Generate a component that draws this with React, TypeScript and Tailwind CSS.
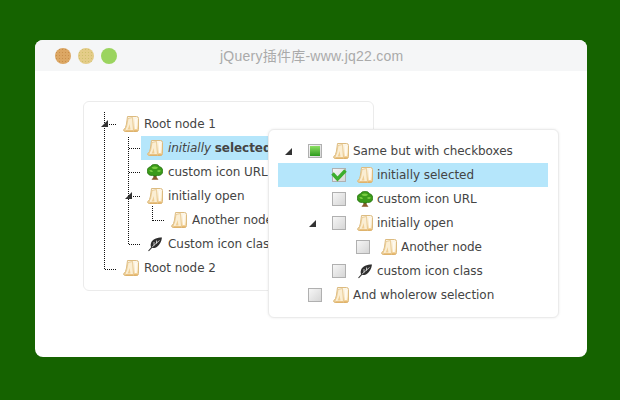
import React from "react";

const font = { fontFamily: '"DejaVu Sans", Verdana, sans-serif' };
const titleFont = { fontFamily: '"Liberation Sans", "Noto Sans CJK SC", sans-serif' };

// jstree style paper folder
function FolderIcon() {
    return (
        <svg width="16" height="16" viewBox="0 0 16 16" className="shrink-0">
            <defs>
                <linearGradient id="folderFill" x1="0" y1="0" x2="0" y2="1">
                    <stop offset="0" stopColor="#fdf8ec" />
                    <stop offset="0.6" stopColor="#f9e8c6" />
                    <stop offset="1" stopColor="#efc987" />
                </linearGradient>
            </defs>
            <path d="M4.5 .5 L13.5 .5 Q15.5 .5 15.5 2.5 L15.5 13.5 Q15.5 15.5 13.5 15.5 L3 15.5 Q.5 15.5 .5 14 Q3 12 3.5 8 L4.5 .5 Z" fill="url(#folderFill)" stroke="#dcbb80" />
            <path d="M5 2.5 L9.5 1.5 L10.5 15 L1.5 15 Q4 11 5 2.5 Z" fill="#fbeed3" stroke="#e5c387" strokeWidth=".8" />
            <path d="M2.5 15 L10 15 M11 15 L14.5 15" stroke="#e0a855" strokeWidth="1.2" />
            <path d="M12.8 3 L12.8 13" stroke="#fffaf0" strokeWidth="2" />
            <path d="M4.5 13.5 C5.5 12 6 10 6.5 8 L7.5 13.5 Z" fill="#f0cf95" />
        </svg>
    );
}

function TreeIcon() {
    return (
        <svg width="16" height="16" viewBox="0 0 16 16" className="shrink-0">
            <path d="M6.5 10 L9.5 10 L9.5 13 L11.5 15.8 L4.5 15.8 L6.5 13 Z" fill="#8a5a2b" />
            <path d="M8 .2 C10.5 .2 11.8 1.5 12.3 2.6 C14.8 3.2 16 5.2 15.8 7.5 C15.5 10.4 13 12 10.5 11.4 C9 12.3 7 12.3 5.5 11.4 C3 12 .5 10.4 .2 7.5 C0 5.2 1.2 3.2 3.7 2.6 C4.2 1.5 5.5 .2 8 .2 Z" fill="#3b9a1a" stroke="#1f6a0c" strokeWidth=".7" />
            <path d="M4.5 3.5 C6.5 2 9 2 11 3.5 C10 5.5 6 5.5 4.5 3.5 Z M2.3 6.3 C3.5 5.5 5.5 6 6 7.5 C5 8.5 3 8.2 2.3 6.3 Z M10 7 C11 5.8 13 5.8 14 6.8 C13 8.4 11 8.4 10 7 Z" fill="#79cc42" />
        </svg>
    );
}

function LeafIcon() {
    return (
        <svg width="16" height="16" viewBox="0 0 16 16" className="shrink-0">
            <path d="M15 1.5 C10 1.5 5.5 3 4 7 C3.4 9 3.6 10.6 4.6 12 C9.5 12.8 13.8 9 15 1.5 Z" fill="#2e2e2e" />
            <path d="M4 12.2 C6.5 9.5 9.5 7 12.5 4.5 M7 9.5 L7 6 M9.5 7.5 L9.5 4.5" fill="none" stroke="#fff" strokeWidth=".7" />
            <path d="M1.5 15 L5 11.2" fill="none" stroke="#2e2e2e" strokeWidth="1.1" />
        </svg>
    );
}

function Triangle() {
    return (
        <svg width="7" height="7" viewBox="0 0 7 7" className="block">
            <path d="M7 0 L7 7 L0 7 Z" fill="#333" />
        </svg>
    );
}

type CheckState = "none" | "checked" | "partial";

function Checkbox({ state }: { state: CheckState }) {
    return (
        <span className="relative block h-[14px] w-[14px] shrink-0 border border-[#b0b0b0] bg-gradient-to-br from-[#f6f6f6] to-[#d6d6d6]">
            {state === "partial" && (
                <span className="absolute inset-[1px] bg-gradient-to-b from-[#8be063] to-[#2a9a1c]" />
            )}
            {state === "checked" && (
                <svg width="16" height="13" viewBox="0 0 16 13" className="absolute -left-[2px] top-0">
                    <path d="M1.5 4.5 L6.5 10 L14.5 1.5" fill="none" stroke="#3cae2e" strokeWidth="3.4" />
                </svg>
            )}
        </span>
    );
}

const leftIndent = ["ml-[33px]", "ml-[57px]", "ml-[81px]"];

const leftNodes = [
    { level: 0, label: <>Root node 1</>, icon: <FolderIcon /> },
    { level: 1, label: <><i>initially</i> <b>selected</b></>, icon: <FolderIcon />, selected: true },
    { level: 1, label: <>custom icon URL</>, icon: <TreeIcon /> },
    { level: 1, label: <>initially open</>, icon: <FolderIcon /> },
    { level: 2, label: <>Another node</>, icon: <FolderIcon /> },
    { level: 1, label: <>Custom icon class</>, icon: <LeafIcon /> },
    { level: 0, label: <>Root node 2</>, icon: <FolderIcon /> },
];

const rightIndent = ["pl-[7px]", "pl-[31px]", "pl-[55px]"];

const rightNodes: { level: number; label: string; icon: React.ReactNode; open?: boolean; state?: CheckState; selected?: boolean }[] = [
    { level: 0, label: "Same but with checkboxes", icon: <FolderIcon />, open: true, state: "partial" },
    { level: 1, label: "initially selected", icon: <FolderIcon />, state: "checked", selected: true },
    { level: 1, label: "custom icon URL", icon: <TreeIcon /> },
    { level: 1, label: "initially open", icon: <FolderIcon />, open: true },
    { level: 2, label: "Another node", icon: <FolderIcon /> },
    { level: 1, label: "custom icon class", icon: <LeafIcon /> },
    { level: 0, label: "And wholerow selection", icon: <FolderIcon /> },
];

// dotted connectors of the first tree, in card coordinates
function Connectors() {
    return (
        <svg width="120" height="180" className="absolute left-0 top-0" fill="none" stroke="#111" strokeDasharray="1 1">
            <path d="M20.5 10 V168" />
            <path d="M21 22.5 H33 M21 167.5 H33" />
            <path d="M44.5 35 V143" />
            <path d="M45 46.5 H57 M45 70.5 H57 M45 94.5 H57 M45 142.5 H57" />
            <path d="M68.5 104 V119" />
            <path d="M69 118.5 H81" />
            <path d="M17 25 L24 18 L24 25 Z" fill="#333" stroke="none" strokeDasharray="none" />
            <path d="M41 97 L48 90 L48 97 Z" fill="#333" stroke="none" strokeDasharray="none" />
        </svg>
    );
}

export default function App() {
    return (
        <div className="h-[400px] w-[620px] overflow-hidden bg-[#156300] pl-[35px] pt-[40px] text-[12px] tracking-[-0.05px] text-[#444]" style={font}>
            <div className="h-[317px] w-[552px] overflow-hidden rounded-[8px] bg-white">
                {/* Window bar */}
                <div className="relative flex h-[31px] items-center gap-[7px] bg-[#f5f6f7] pl-[20px]">
                    <span className="h-4 w-4 rounded-full bg-[#dca764] bg-[radial-gradient(#c98f4a_1px,transparent_1px)] bg-[length:3px_3px]" />
                    <span className="h-4 w-4 rounded-full bg-[#e4cc88] bg-[radial-gradient(#cfc06c_1px,transparent_1px)] bg-[length:3px_3px]" />
                    <span className="h-4 w-4 rounded-full bg-[#9bd45f]" />
                    <span className="absolute left-[185px] top-[6px] text-[14px] leading-[20px] tracking-[0.24px] text-[#aaa]" style={titleFont}>jQuery插件库-www.jq22.com</span>
                </div>

                <div className="flex items-start">
                    {/* First tree */}
                    <div className="relative ml-[48px] mt-[30px] h-[190px] w-[291px] shrink-0 rounded-[6px] border border-[#ebebeb] bg-white pt-[10px]">
                        <Connectors />
                        {leftNodes.map((node, idx) => (
                            <div key={idx} className={`relative flex h-[24px] w-fit items-center gap-[5px] whitespace-nowrap px-[6px] ${leftIndent[node.level]} ${node.selected ? "bg-[#b5e6fb]" : ""}`}>
                                {node.icon}
                                <span>{node.label}</span>
                            </div>
                        ))}
                    </div>

                    {/* Same tree with checkboxes */}
                    <div className="relative z-10 -ml-[106px] mt-[58px] h-[189px] w-[291px] shrink-0 rounded-[6px] border border-[#ebebeb] bg-white pl-[9px] pr-[10px] pt-[9px] shadow-[0_0_3px_rgba(0,0,0,0.08)]">
                        {rightNodes.map((node, idx) => (
                            <div key={idx} className={`flex h-[24px] items-center whitespace-nowrap ${rightIndent[node.level]} ${node.selected ? "bg-[#b5e6fb]" : ""}`}>
                                <span className="w-[23px] shrink-0">{node.open && <Triangle />}</span>
                                <Checkbox state={node.state ?? "none"} />
                                <span className="ml-[11px]">{node.icon}</span>
                                <span className="ml-[4px]">{node.label}</span>
                            </div>
                        ))}
                    </div>
                </div>
            </div>
        </div>
    );
}
